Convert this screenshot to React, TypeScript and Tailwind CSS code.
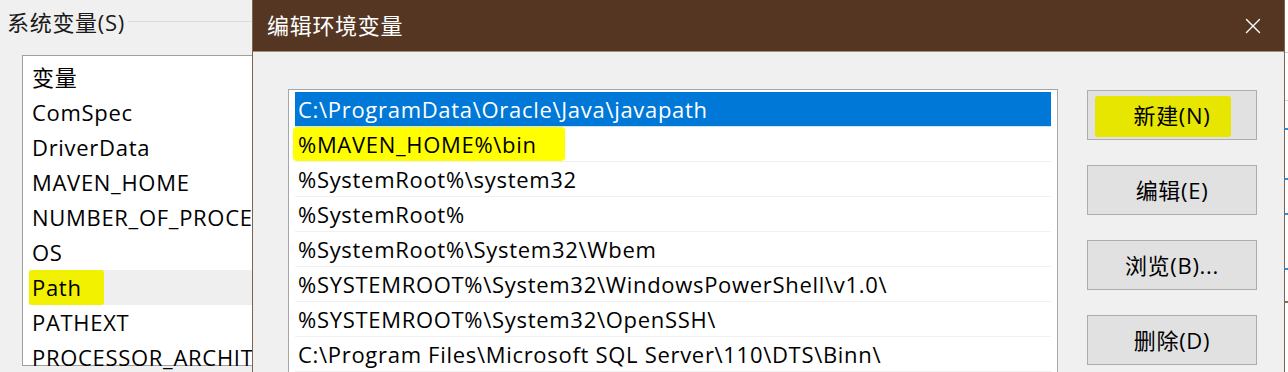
import { X } from 'lucide-react';

const font = {
  fontFamily: '"Open Sans", "Noto Sans CJK SC", sans-serif',
  letterSpacing: '0.7px',
};

const sysVars = [
  'ComSpec',
  'DriverData',
  'MAVEN_HOME',
  'NUMBER_OF_PROCESSORS',
  'OS',
  'Path',
  'PATHEXT',
  'PROCESSOR_ARCHITECTURE',
];

const paths = [
  'C:\\ProgramData\\Oracle\\Java\\javapath',
  '%MAVEN_HOME%\\bin',
  '%SystemRoot%\\system32',
  '%SystemRoot%',
  '%SystemRoot%\\System32\\Wbem',
  '%SYSTEMROOT%\\System32\\WindowsPowerShell\\v1.0\\',
  '%SYSTEMROOT%\\System32\\OpenSSH\\',
  'C:\\Program Files\\Microsoft SQL Server\\110\\DTS\\Binn\\',
];

const buttons = ['新建(N)', '编辑(E)', '浏览(B)...', '删除(D)'];

function SystemVars() {
  return (
    <div className="w-[252px] shrink-0 overflow-hidden bg-[#f0f0f0]">
      <div className="flex h-[55px] items-start">
        <span className="ml-[7px] mt-[6px] whitespace-nowrap text-[22px] leading-[32px] text-[#1a1a1a]">
          系统变量(S)
        </span>
        <div className="ml-[3px] mt-[21px] h-px flex-1 bg-[#dcdcdc]" />
      </div>
      <div className="ml-[22px] h-[311px] w-[300px] border border-[#a0a0a0] bg-white pl-[6px] pt-[4px]">
        <div className="h-[35px] pl-[3px] text-[22px] leading-[35px] text-black">变量</div>
        {sysVars.map((v) => (
          <div
            key={v}
            className={`h-[35px] whitespace-nowrap pl-[3px] text-[22px] leading-[35px] text-black ${
              v === 'Path' ? 'bg-[#efefef]' : ''
            }`}
          >
            {v === 'Path' ? (
              <span className="-ml-[3px] inline-block rounded-[3px] bg-[#f2f200] pl-[3px] pr-[22px]">Path</span>
            ) : (
              v
            )}
          </div>
        ))}
      </div>
    </div>
  );
}

function EditDialog() {
  return (
    <div className="flex w-[1033px] shrink-0 flex-col border-x border-[#7d6352] bg-[#f0f0f0]">
      <div className="flex h-[52px] shrink-0 items-center justify-between border-b border-[#a58c7c] bg-[#553623] pl-[14px] pr-[18px]">
        <span className="text-[22px] text-white">编辑环境变量</span>
        <X size={26} strokeWidth={1.3} className="text-white" />
      </div>
      <div className="flex gap-[29px] pl-[35px] pt-[37px]">
        <div className="h-[300px] w-[770px] shrink-0 overflow-hidden border border-[#a6a6a6] bg-white px-[6px] pt-[2px]">
          {paths.map((p, i) => (
            <div
              key={p}
              className={`h-[35px] whitespace-nowrap border-b pl-[3px] text-[22px] leading-[34px] ${
                i === 0 ? 'border-[#cde3f7] bg-[#0078d7] text-white' : 'border-[#f0f0f0] text-black'
              }`}
            >
              {i === 1 ? (
                <span className="-ml-[5px] inline-block rounded-[4px] bg-[#ffff00] pl-[5px] pr-[28px]">{p}</span>
              ) : (
                p
              )}
            </div>
          ))}
        </div>
        <div className="flex flex-col gap-[25px] pt-[1px]">
          {buttons.map((b, i) => (
            <div
              key={b}
              className="relative flex h-[50px] w-[170px] shrink-0 items-center justify-center border border-[#adadad] bg-[#e1e1e1] text-[22px] text-black"
            >
              {i === 0 && (
                <div className="absolute left-[7px] top-[5px] h-[41px] w-[136px] rounded-[3px] bg-[#e6e600]" />
              )}
              <span className="relative">{b}</span>
            </div>
          ))}
        </div>
      </div>
    </div>
  );
}

export default function App() {
  return (
    <div className="flex h-[372px] w-[1288px] overflow-hidden bg-white" style={font}>
      <SystemVars />
      <EditDialog />
      <div className="flex-1 bg-white">
        <div className="mt-[52px] h-px bg-[#cfcfcf]" />
        <div className="mt-[47px] h-px bg-[#cfcfcf]" />
        <div className="mt-[27px] h-[2px] bg-[#2d8fe0]" />
        <div className="mt-[48px] h-[2px] bg-[#2d8fe0]" />
        <div className="mt-[33px] h-[2px] bg-[#2d8fe0]" />
        <div className="mt-[53px] h-[2px] bg-[#2d8fe0]" />
        <div className="mt-[31px] h-[2px] bg-[#8a6a55]" />
      </div>
    </div>
  );
}
